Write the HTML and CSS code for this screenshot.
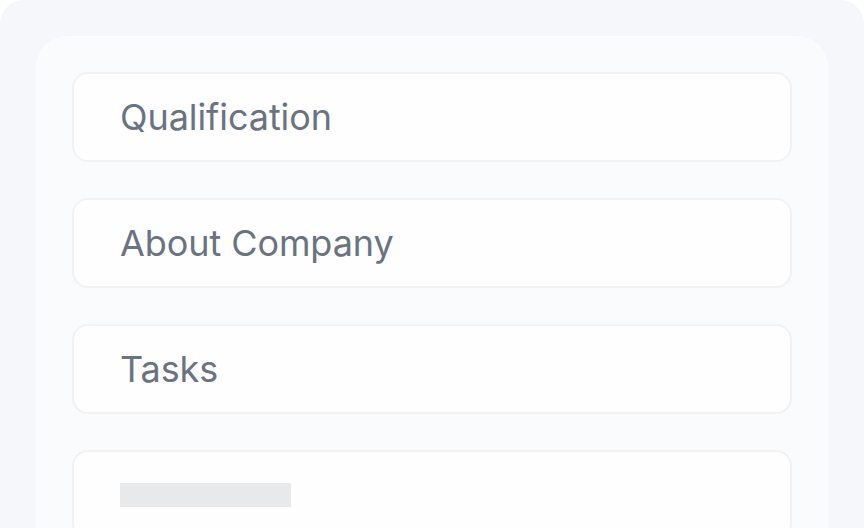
FILE: index.html
```html
<!DOCTYPE html>
<html lang="en">
<head>
<meta charset="utf-8">
<title>Job details</title>
<link rel="stylesheet" href="styles.css">
</head>
<body>
<div class="outer">
  <div class="card">
    <div class="item"><span class="label">Qualification</span></div>
    <div class="item"><span class="label">About Company</span></div>
    <div class="item"><span class="label">Tasks</span></div>
    <div class="item"><span class="skeleton"></span></div>
  </div>
</div>
</body>
</html>
```
FILE: styles.css
```css
html, body {
  margin: 0;
  padding: 0;
  background: #ffffff;
  overflow: hidden;
}
body {
  width: 864px;
  height: 528px;
  font-family: Inter, "Noto Sans", sans-serif;
}
.outer {
  background: #f6f7fa;
  border-radius: 24px 24px 0 0;
  padding: 36px 36px 0 36px;
  height: 528px;
  box-sizing: border-box;
  overflow: hidden;
}
.card {
  background: #fafbfd;
  border: 1px solid #fcfdfe;
  border-bottom: none;
  border-radius: 32px 32px 0 0;
  padding: 35px 35px 0 35px;
  height: 100%;
  box-sizing: border-box;
  display: flex;
  flex-direction: column;
  gap: 36px;
  overflow: hidden;
}
.item {
  flex: none;
  height: 90px;
  box-sizing: border-box;
  background: #fefefe;
  border: 2px solid #f1f2f4;
  border-radius: 16px;
  padding: 0 46px;
  display: flex;
  align-items: center;
}
.label {
  font-size: 36px;
  color: #6b7280;
  font-weight: 400;
  letter-spacing: -0.08px;
}
.skeleton {
  display: block;
  width: 171px;
  height: 24px;
  background: #e8e9eb;
}
```
